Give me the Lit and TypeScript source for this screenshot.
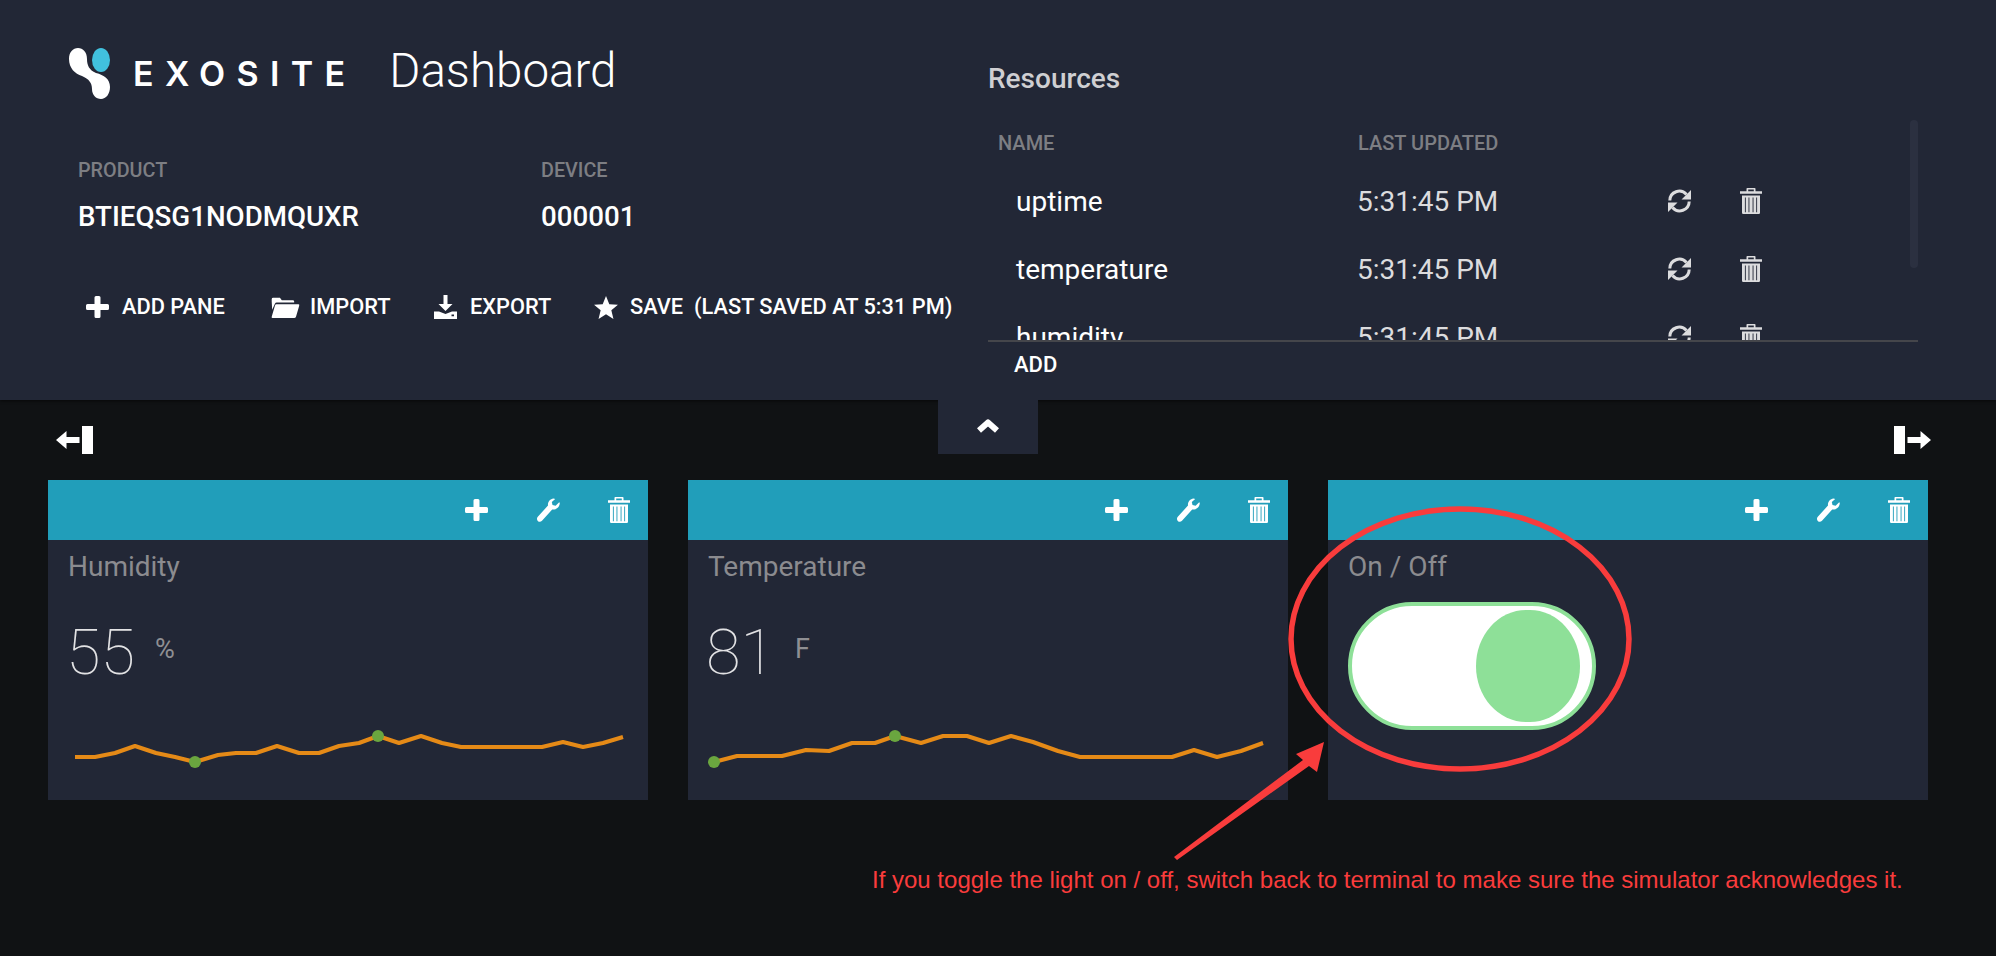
import { LitElement, html, svg, css } from "lit";
import { customElement } from "lit/decorators.js";

const plusIcon = html`<svg viewBox="0 0 23 22" width="23" height="22"><path fill="currentColor" d="M8.5 1.5Q8.5 0 10 0h3q1.500 0 1.500 1.500V8h7Q23 8 23 9.500v3q0 1.500-1.500 1.500h-7v6.500Q14.500 22 13 22h-3q-1.500 0-1.500-1.500V14h-7Q0 14 0 12.500v-3Q0 8 1.500 8h7z"/></svg>`;
const wrenchIcon = html`<svg viewBox="0 0 24 25" width="24" height="25"><path fill="currentColor" d="M17.500 .500C14 1 11.500 4 12 7.500L1.800 18.800C.6 20 .8 21.800 1.800 22.900C3 24.200 4.800 24 6 22.800L16.200 11.500C20 12 23.500 9.500 23.800 5L23.200 4.300L19.600 7.800L16.500 7L15.800 3.900L19.200 1Z"/></svg>`;
const trashIcon = html`<svg viewBox="0 0 22 26" width="22" height="26"><path fill="currentColor" fill-rule="evenodd" d="M6.500 3.200V.8Q6.500 0 7.300 0h7.400q.8 0 .8.8v2.400H22v2.600H0V3.200zM8.200 3.200h5.600V1.400H8.200zM2 7.400h18v17.400q0 1.200-1.200 1.200H3.200Q2 26 2 24.800zM4.900 9.400v14.800h.9V9.400zM8.500 9.400v14.800h.9V9.400zM12.600 9.400v14.800h.9V9.400zM16.200 9.400v14.800h.9V9.400z"/></svg>`;
const refreshIcon = html`<svg viewBox="0 0 25 24" width="25" height="24"><g fill="none" stroke="currentColor" stroke-width="3"><path d="M2.800 11.500A9.500 9.500 0 0 1 19.500 5.500"/><path d="M22.200 12.500A9.500 9.500 0 0 1 5.500 18.500"/></g><path fill="currentColor" d="M24 1v9.500h-9.500zM1 23v-9.500h9.500z"/></svg>`;
const folderIcon = html`<svg viewBox="0 0 31 24" width="30" height="22"><path fill="currentColor" d="M1 6V3.500Q1 2 2.500 2H10l2 2.500h12q1.500 0 1.500 1.500v1H6.500Q5 7 4.500 8.500L1.500 15zM6 9h24q1.500 0 1 1.500L27.500 22.500Q27 24 25.500 24H2Q.5 24 1 22.500L4.500 10.500Q5 9 6 9z"/></svg>`;
const exportIcon = html`<svg viewBox="0 0 23 24" width="23" height="24"><path fill="currentColor" fill-rule="evenodd" d="M9.500 0h4v9h5l-7 7-7-7h5zM0 16.500h5l6.500 2.500 6.500-2.500h5V24H0zM17.500 19.500v1.700h2.500v-1.700z"/></svg>`;
const starIcon = html`<svg viewBox="0 0 26 25" width="24" height="23"><path fill="currentColor" d="M13 0l3.600 8.900 9.400.7-7.200 6 2.300 9.400L13 19.900 4.900 25l2.300-9.400-7.200-6 9.400-.7z"/></svg>`;
const chevronIcon = html`<svg viewBox="0 0 24 14" width="24" height="14"><path fill="none" stroke="currentColor" stroke-width="6" stroke-linejoin="round" d="M3 11.500 12 3.500 21 11.500"/></svg>`;
const collapseLeft = html`<svg viewBox="0 0 37 28" width="37" height="28"><path fill="currentColor" d="M26 0h11v28H26zM0 14 10.500 5v6h13v6h-13v6z"/></svg>`;
const collapseRight = html`<svg viewBox="0 0 37 28" width="37" height="28"><path fill="currentColor" d="M0 0h11v28H0zM37 14 26.500 5v6h-13v6h13v6z"/></svg>`;

const humidityLine: [number, number][] = [
  [27, 37], [47, 37], [67, 33], [87, 26], [108, 33], [127, 37], [147, 42], [170, 35], [188, 33], [208, 33],
  [229, 26], [251, 33], [271, 33], [291, 26], [311, 23], [330, 16], [351, 23], [373, 16], [394, 23], [413, 27],
  [494, 27], [515, 22], [535, 27], [555, 23], [575, 17],
];
const temperatureLine: [number, number][] = [
  [26, 42], [49, 36], [94, 36], [118, 30], [141, 31], [164, 23], [187, 23], [207, 16], [233, 23], [255, 16],
  [279, 16], [301, 23], [323, 16], [345, 22], [370, 31], [392, 37], [484, 37], [506, 30], [529, 37], [553, 31], [575, 23],
];

const resources = ["uptime", "temperature", "humidity"];

@customElement("pane-card")
export class PaneCard extends LitElement {
  static override styles = css`
    :host {
      display: block;
      height: 320px;
      background: #222736;
    }
    .bar {
      height: 60px;
      background: #219eba;
      color: #fff;
      display: flex;
      align-items: center;
      justify-content: flex-end;
      gap: 48px;
      padding-right: 18px;
    }
    .bar svg {
      display: block;
    }
    .title {
      padding: 9px 20px 0;
      font-size: 28px;
      line-height: 36px;
      color: #8b8b8f;
    }
  `;

  override render() {
    return html`<div class="bar">${plusIcon}${wrenchIcon}${trashIcon}</div>
      <div class="title"><slot name="title"></slot></div>
      <slot></slot>`;
  }
}

@customElement("value-spark")
export class ValueSpark extends LitElement {
  static properties = {
    value: {},
    unit: {},
    points: { attribute: false },
    dots: { attribute: false },
  };

  value = "";
  unit = "";
  points: [number, number][] = [];
  dots: number[] = [];

  static override styles = css`
    :host {
      display: block;
    }
    .reading {
      display: flex;
      align-items: flex-start;
      height: 88px;
      padding: 33px 0 0 18px;
      box-sizing: border-box;
    }
    .num {
      font-size: 63px;
      font-weight: 100;
      line-height: 70px;
      color: #e2e2e4;
    }
    .unit {
      margin: 16px 0 0 20px;
      font-size: 27px;
      line-height: 30px;
      color: #8f8f93;
    }
    svg {
      display: block;
      margin-top: 47px;
    }
  `;

  override render() {
    const line = this.points.map((p) => p.join(",")).join(" ");
    return html`<div class="reading">
        <span class="num">${this.value}</span><span class="unit">${this.unit}</span>
      </div>
      <svg width="600" height="60" viewBox="0 0 600 60">
        <polyline points=${line} fill="none" stroke="#e58a17" stroke-width="4" stroke-linejoin="round"></polyline>
        ${this.dots.map((i) => svg`<circle cx=${this.points[i][0]} cy=${this.points[i][1]} r="6" fill="#6aa63f"></circle>`)}
      </svg>`;
  }
}

@customElement("app-root")
export class AppRoot extends LitElement {
  static override styles = css`
    :host {
      display: block;
      position: relative;
      width: 1996px;
      height: 956px;
      overflow: hidden;
      background: #101214;
      font-family: Roboto, "Liberation Sans", sans-serif;
      color: #fff;
    }
    .top {
      height: 400px;
      box-sizing: border-box;
      background: #222736;
      box-shadow: 0 1px 3px rgba(0, 0, 0, 0.6);
      display: flex;
    }
    .left {
      width: 988px;
      flex: none;
      padding: 48px 0 0 69px;
      box-sizing: border-box;
    }
    .brand {
      display: flex;
      align-items: center;
      height: 51px;
    }
    .brand svg {
      display: block;
    }
    .wordmark {
      margin-left: 23px;
      font-family: Inter, sans-serif;
      font-size: 34px;
      font-weight: 600;
      letter-spacing: 11.300px;
      line-height: 51px;
    }
    .heading {
      margin: 0 0 4px 33px;
      font-size: 47.500px;
      font-weight: 300;
      line-height: 51px;
    }
    .meta {
      display: grid;
      grid-template-columns: 463px auto;
      margin: 60px 0 0 9px;
    }
    .label {
      font-size: 19.800px;
      font-weight: 500;
      line-height: 24px;
      color: #7d7e83;
    }
    .value {
      margin-top: 16px;
      font-size: 27.700px;
      font-weight: 500;
      line-height: 36px;
    }
    .tools {
      display: flex;
      align-items: center;
      margin: 59px 0 0 17px;
      font-size: 21.800px;
      font-weight: 500;
      line-height: 26px;
      white-space: nowrap;
    }
    .tool {
      display: flex;
      align-items: center;
    }
    .tool svg {
      display: block;
    }
    .icon {
      width: 36px;
    }
    .icon.wide {
      width: 40px;
    }
    .add-pane {
      width: 184px;
    }
    .import {
      width: 164px;
    }
    .export {
      width: 160px;
    }
    .right {
      width: 930px;
      flex: none;
      padding-top: 64px;
      box-sizing: border-box;
    }
    .res-title {
      font-size: 28px;
      font-weight: 500;
      line-height: 30px;
      color: #cfcfd2;
    }
    .list {
      position: relative;
      height: 246px;
      overflow: hidden;
      border-bottom: 2px solid #45464b;
    }
    .scroll {
      position: absolute;
      top: 26px;
      right: 0;
      width: 8px;
      height: 148px;
      border-radius: 4px;
      background: #2b3040;
    }
    .row {
      display: grid;
      grid-template-columns: 341px 310px 73px auto;
      align-items: center;
      padding-left: 28px;
      height: 68px;
      font-size: 28px;
    }
    .row svg {
      display: block;
    }
    .row .time,
    .row svg {
      color: #dcdcde;
    }
    .row.head {
      height: 42px;
      margin: 28px 0 3px;
      padding-left: 10px;
      grid-template-columns: 360px auto;
      font-size: 20px;
      font-weight: 500;
      color: #7d7e83;
    }
    .add {
      padding: 10px 0 0 26px;
      font-size: 22px;
      font-weight: 500;
      line-height: 26px;
    }
    .tab {
      width: 100px;
      height: 54px;
      background: #222736;
      display: flex;
      align-items: center;
      justify-content: center;
      padding-bottom: 2px;
      box-sizing: border-box;
    }
    .tab svg,
    .nav svg {
      display: block;
    }
    .nav {
      display: grid;
      grid-template-columns: 882px 1fr auto;
      align-items: start;
      padding: 0 65px 0 56px;
      height: 80px;
    }
    .nav .mark {
      margin-top: 26px;
    }
    .panes {
      display: grid;
      grid-template-columns: repeat(3, 600px);
      gap: 40px;
      padding-left: 48px;
    }
    .switch {
      width: 248px;
      height: 128px;
      box-sizing: border-box;
      margin: 17px 0 0 20px;
      padding: 4px 12px 0 0;
      border: 4px solid #8ee098;
      border-radius: 64px;
      background: #fff;
      display: flex;
      justify-content: flex-end;
    }
    .knob {
      width: 104px;
      height: 112px;
      border-radius: 50px / 56px;
      background: #8ee098;
    }
    .overlay {
      position: absolute;
      inset: 0;
      pointer-events: none;
    }
    .note {
      position: absolute;
      left: 872px;
      top: 866px;
      font-family: "Liberation Sans", Arial, sans-serif;
      font-size: 24px;
      line-height: 28px;
      white-space: nowrap;
      color: #f93c3c;
    }
  `;

  private renderResource(name: string) {
    return html`<div class="row">
      <span>${name}</span>
      <span class="time">5:31:45 PM</span>
      ${refreshIcon}${trashIcon}
    </div>`;
  }

  override render() {
    return html`
      <header class="top">
        <div class="left">
          <div class="brand">
            <svg viewBox="0 0 41 51" width="41" height="51">
              <ellipse cx="32" cy="12" rx="9" ry="12" fill="#41c1de"></ellipse>
              <path
                fill="#fff"
                d="M9 0C14 0 18 4 18 11C18 17 20 22 27 25C35 27 41 31 41 39C41 46 37 51 32 51C27 51 23 47 23 41C23 35 20 31 13 28C6 26 0 20 0 11C0 4 4 0 9 0Z"
              ></path>
            </svg>
            <span class="wordmark">EXOSITE</span>
            <span class="heading">Dashboard</span>
          </div>
          <div class="meta">
            <div>
              <div class="label">PRODUCT</div>
              <div class="value">BTIEQSG1NODMQUXR</div>
            </div>
            <div>
              <div class="label">DEVICE</div>
              <div class="value">000001</div>
            </div>
          </div>
          <div class="tools">
            <span class="tool add-pane"><span class="icon">${plusIcon}</span><span>ADD PANE</span></span>
            <span class="tool import"><span class="icon wide">${folderIcon}</span><span>IMPORT</span></span>
            <span class="tool export"><span class="icon">${exportIcon}</span><span>EXPORT</span></span>
            <span class="tool"><span class="icon">${starIcon}</span><span>SAVE&nbsp;&nbsp;(LAST SAVED AT 5:31 PM)</span></span>
          </div>
        </div>
        <div class="right">
          <div class="res-title">Resources</div>
          <div class="list">
            <div class="row head"><span>NAME</span><span>LAST UPDATED</span></div>
            ${resources.map((r) => this.renderResource(r))}
            <div class="scroll"></div>
          </div>
          <div class="add">ADD</div>
        </div>
      </header>
      <div class="nav">
        <span class="mark">${collapseLeft}</span>
        <span class="tab">${chevronIcon}</span>
        <span class="mark">${collapseRight}</span>
      </div>
      <main class="panes">
        <pane-card>
          <span slot="title">Humidity</span>
          <value-spark value="55" unit="%" .points=${humidityLine} .dots=${[6, 15]}></value-spark>
        </pane-card>
        <pane-card>
          <span slot="title">Temperature</span>
          <value-spark value="81" unit="F" .points=${temperatureLine} .dots=${[0, 7]}></value-spark>
        </pane-card>
        <pane-card>
          <span slot="title">On / Off</span>
          <div class="switch"><div class="knob"></div></div>
        </pane-card>
      </main>
      <svg class="overlay" viewBox="0 0 1996 956" width="1996" height="956">
        <ellipse cx="1460" cy="639" rx="169" ry="130" fill="none" stroke="#f93c3c" stroke-width="5.500"></ellipse>
        <path fill="#f93c3c" d="M1324 742 1317 772 1309 766 1177 860 1174 857 1303 760 1296 754z"></path>
      </svg>
      <div class="note">If you toggle the light on / off, switch back to terminal to make sure the simulator acknowledges it.</div>
    `;
  }
}
